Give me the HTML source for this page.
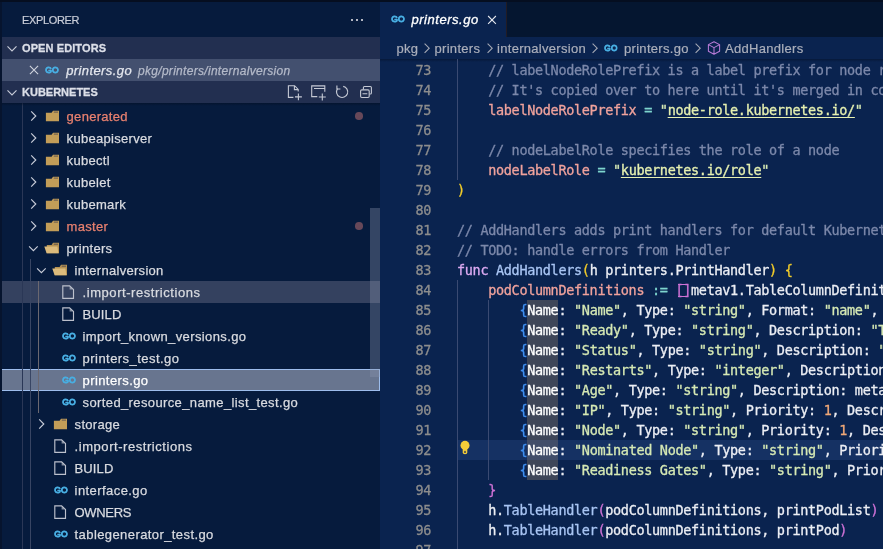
<!DOCTYPE html>
<html><head><meta charset="utf-8"><title>printers.go</title>
<style>
*{box-sizing:border-box;margin:0;padding:0}
html,body{width:883px;height:549px;overflow:hidden;background:#061b3d}
body{position:relative;font-family:"Liberation Sans",sans-serif;font-size:13px;color:#d6dae4;-webkit-font-smoothing:antialiased}
.ab{position:absolute}
#side{will-change:transform;position:absolute;left:0;top:0;width:380px;height:549px;background:#061b3d;overflow:hidden}
#edit{will-change:transform;position:absolute;left:380px;top:0;width:503px;height:549px;background:#0a234f;overflow:hidden}
.row{position:absolute;left:0;width:380px;height:22px}
.row.hov{background:#34415f}
.row.sel{background:#68758f;border:1px solid #9dbdec}
.row.sel>*{margin:-1px 0 0 -1px}
.lbl{position:absolute;top:1px;line-height:22px;white-space:nowrap;color:#d9dbe0;letter-spacing:0.3px;-webkit-text-stroke:0.25px}
.sel .lbl{color:#fff}
.ico,.chev{display:block}
.dot{position:absolute;left:355px;top:7.2px;width:7.6px;height:7.6px;border-radius:50%;background:#674859}
.hdr{position:absolute;left:0;width:380px;height:22px;background:#222f50;font-size:11px;font-weight:bold;line-height:22px;color:#dcdfe8;-webkit-text-stroke:0.3px}
.hdr .t{position:absolute;left:22px;top:0;letter-spacing:0.1px}
.ln{position:absolute;left:0;width:51px;height:20px;line-height:20px;text-align:right;color:#8d8d8d;font-family:"DejaVu Sans Mono","Liberation Mono",monospace;font-size:13.5px;letter-spacing:-0.327px;padding-right:0;-webkit-text-stroke:0.3px}
.cl{position:absolute;left:77px;width:440px;height:20px;line-height:20px;white-space:pre;font-family:"DejaVu Sans Mono","Liberation Mono",monospace;font-size:13.5px;letter-spacing:-0.327px;color:#e4e7f0;-webkit-text-stroke:0.3px}

.c{color:#7c88aa} .v{color:#f0a29c} .o{color:#7fd6cf} .s{color:#d6e9b4} .su{color:#e6f0b0;text-decoration:underline;text-underline-offset:2px}
.k{color:#dcaaf2} .f{color:#a9c5f3} .w{color:#eceef4} .n{color:#f0a878}
.b1{color:#f2cc2a} .b2{color:#cf72d6} .b3{color:#3f8ff0}
.bb{display:inline-block;height:20px;vertical-align:top;background:linear-gradient(#cf72d6,#cf72d6) 3px 3.7px/9.5px 1.3px no-repeat,linear-gradient(#cf72d6,#cf72d6) 3px 15.8px/9.5px 1.3px no-repeat}
.hl{background:#3e4658;color:#fff;display:inline-block;height:20px;vertical-align:top}
.cur .hl{background:#414d69}
.bc{position:absolute;top:37px;left:0;width:503px;height:22px;line-height:22px;color:#abafbb;white-space:nowrap;letter-spacing:0.3px;-webkit-text-stroke:0.2px}
.bc>span{position:absolute;top:1px}
</style></head><body>
<div id="side">
  <div class="ab" style="left:22px;top:11px;font-size:11px;line-height:18px;color:#c9cdd8;letter-spacing:-0.35px;-webkit-text-stroke:0.2px">EXPLORER</div>
  <div class="ab" style="left:351px;top:19px;width:2px;height:2px;background:#b2b6c2;box-shadow:5px 0 #b2b6c2,10px 0 #b2b6c2"></div>
  <div class="hdr" style="top:37px"><span class="ab" style="left:4px;top:3px"><svg class="chev" width="16" height="16" viewBox="0 0 16 16"><path d="M3.5 6.4 L8 10.9 L12.5 6.4" fill="none" stroke="#c8ccd8" stroke-width="1.15"/></svg></span><span class="t">OPEN EDITORS</span></div>
  <div class="row" style="top:59px;background:#43506f">
    <svg class="ab" style="left:26px;top:3px" width="16" height="16" viewBox="0 0 16 16"><path d="M3.9 3.9 L12.1 12.1 M12.1 3.9 L3.9 12.1" stroke="#d0d4de" stroke-width="1.1" fill="none"/></svg>
    <span class="ab" style="left:44px;top:3px"><svg class="ico go" width="16" height="16" viewBox="0 0 16 16"><text x="1.2" y="11.4" font-family="Liberation Sans, sans-serif" font-size="9.6" fill="#48aee2" stroke="#48aee2" stroke-width="1" stroke-linejoin="round" textLength="13.4" lengthAdjust="spacingAndGlyphs">GO</text></svg></span>
    <span class="lbl" style="left:66.2px;font-style:italic;color:#e4e7ee;letter-spacing:0.4px">printers.go</span>
    <span class="lbl" style="left:138px;font-style:italic;font-size:12px;color:#b4bac9">pkg/printers/internalversion</span>
  </div>
  <div class="hdr" style="top:81px"><span class="ab" style="left:4px;top:3px"><svg class="chev" width="16" height="16" viewBox="0 0 16 16"><path d="M3.5 6.4 L8 10.9 L12.5 6.4" fill="none" stroke="#c8ccd8" stroke-width="1.15"/></svg></span><span class="t" style="letter-spacing:0">KUBERNETES</span><svg class="ab" style="left:280px;top:0" width="100" height="22" viewBox="280 81 100 22" fill="none" stroke="#c5c9d4" stroke-width="1.1">
<path d="M293.4 97.4 H288.4 V85.7 H294.6 L298.2 89.4 V91.6 M294.4 85.9 V89.6 H298"/>
<path d="M298.4 93.6 V100.2 M295 96.9 H301.9"/>
<path d="M317.3 96.6 H311.7 V85.9 H324.8 V91.8 M314 88.5 H324.6" />
<path d="M322.3 93.6 V100.4 M318.8 97 H325.8"/>
<path d="M337.6 88.6 A5.6 5.6 0 1 0 343.2 86.4" />
<path d="M336.9 85.4 V89 H340.4" />
<rect x="360.6" y="89.9" width="8.6" height="7.6" rx="1.2"/>
<path d="M363.4 89.6 V87.6 Q363.4 86.5 364.5 86.5 H370.3 Q371.4 86.5 371.4 87.6 V92.9 Q371.4 94 370.3 94 H369.5 M362.5 93.7 H367.3"/>
</svg>
  </div>
<div class="row" style="top:105px"><span class="ab" style="left:25px;top:3px"><svg class="chev" width="16" height="16" viewBox="0 0 16 16"><path d="M6.2 3.4 L10.8 8 L6.2 12.6" fill="none" stroke="#c8ccd8" stroke-width="1.15"/></svg></span><span class="ab" style="left:45px;top:3px"><svg class="ico" width="16" height="16" viewBox="0 0 16 16"><path d="M0.9 4.7 H6.6 L8 2.65 H14 V13.3 H0.9 Z" fill="#c29d58"/><path d="M8.8 4.1 H13" stroke="#3a3a4a" stroke-width="0.7"/></svg></span><span class="lbl" style="left:66.6px;color:#e8806f;">generated</span><span class="dot"></span></div>
<div class="row" style="top:127px"><span class="ab" style="left:25px;top:3px"><svg class="chev" width="16" height="16" viewBox="0 0 16 16"><path d="M6.2 3.4 L10.8 8 L6.2 12.6" fill="none" stroke="#c8ccd8" stroke-width="1.15"/></svg></span><span class="ab" style="left:45px;top:3px"><svg class="ico" width="16" height="16" viewBox="0 0 16 16"><path d="M0.9 4.7 H6.6 L8 2.65 H14 V13.3 H0.9 Z" fill="#c29d58"/><path d="M8.8 4.1 H13" stroke="#3a3a4a" stroke-width="0.7"/></svg></span><span class="lbl" style="left:66.6px;">kubeapiserver</span></div>
<div class="row" style="top:149px"><span class="ab" style="left:25px;top:3px"><svg class="chev" width="16" height="16" viewBox="0 0 16 16"><path d="M6.2 3.4 L10.8 8 L6.2 12.6" fill="none" stroke="#c8ccd8" stroke-width="1.15"/></svg></span><span class="ab" style="left:45px;top:3px"><svg class="ico" width="16" height="16" viewBox="0 0 16 16"><path d="M0.9 4.7 H6.6 L8 2.65 H14 V13.3 H0.9 Z" fill="#c29d58"/><path d="M8.8 4.1 H13" stroke="#3a3a4a" stroke-width="0.7"/></svg></span><span class="lbl" style="left:66.6px;">kubectl</span></div>
<div class="row" style="top:171px"><span class="ab" style="left:25px;top:3px"><svg class="chev" width="16" height="16" viewBox="0 0 16 16"><path d="M6.2 3.4 L10.8 8 L6.2 12.6" fill="none" stroke="#c8ccd8" stroke-width="1.15"/></svg></span><span class="ab" style="left:45px;top:3px"><svg class="ico" width="16" height="16" viewBox="0 0 16 16"><path d="M0.9 4.7 H6.6 L8 2.65 H14 V13.3 H0.9 Z" fill="#c29d58"/><path d="M8.8 4.1 H13" stroke="#3a3a4a" stroke-width="0.7"/></svg></span><span class="lbl" style="left:66.6px;">kubelet</span></div>
<div class="row" style="top:193px"><span class="ab" style="left:25px;top:3px"><svg class="chev" width="16" height="16" viewBox="0 0 16 16"><path d="M6.2 3.4 L10.8 8 L6.2 12.6" fill="none" stroke="#c8ccd8" stroke-width="1.15"/></svg></span><span class="ab" style="left:45px;top:3px"><svg class="ico" width="16" height="16" viewBox="0 0 16 16"><path d="M0.9 4.7 H6.6 L8 2.65 H14 V13.3 H0.9 Z" fill="#c29d58"/><path d="M8.8 4.1 H13" stroke="#3a3a4a" stroke-width="0.7"/></svg></span><span class="lbl" style="left:66.6px;">kubemark</span></div>
<div class="row" style="top:215px"><span class="ab" style="left:25px;top:3px"><svg class="chev" width="16" height="16" viewBox="0 0 16 16"><path d="M6.2 3.4 L10.8 8 L6.2 12.6" fill="none" stroke="#c8ccd8" stroke-width="1.15"/></svg></span><span class="ab" style="left:45px;top:3px"><svg class="ico" width="16" height="16" viewBox="0 0 16 16"><path d="M0.9 4.7 H6.6 L8 2.65 H14 V13.3 H0.9 Z" fill="#c29d58"/><path d="M8.8 4.1 H13" stroke="#3a3a4a" stroke-width="0.7"/></svg></span><span class="lbl" style="left:66.6px;color:#e8806f;">master</span><span class="dot"></span></div>
<div class="row" style="top:237px"><span class="ab" style="left:25px;top:3px"><svg class="chev" width="16" height="16" viewBox="0 0 16 16"><path d="M4.1 6.3 L8.4 10.6 L12.7 6.3" fill="none" stroke="#c8ccd8" stroke-width="1.15"/></svg></span><span class="ab" style="left:45px;top:3px"><svg class="ico" style="overflow:visible" width="16" height="16" viewBox="0 0 16 16"><path d="M1.8 4.9 H6.6 L8 2.85 H14 V13.2 H1.8 Z" fill="#b59253"/><path d="M8.8 4.2 H13" stroke="#3a3a4a" stroke-width="0.7"/><path d="M-0.7 6.6 H12.4 L13.5 13.35 H1.6 Z" fill="#dcbb7c"/></svg></span><span class="lbl" style="left:66.6px;">printers</span></div>
<div class="row" style="top:259px"><span class="ab" style="left:33px;top:3px"><svg class="chev" width="16" height="16" viewBox="0 0 16 16"><path d="M4.1 6.3 L8.4 10.6 L12.7 6.3" fill="none" stroke="#c8ccd8" stroke-width="1.15"/></svg></span><span class="ab" style="left:53px;top:3px"><svg class="ico" style="overflow:visible" width="16" height="16" viewBox="0 0 16 16"><path d="M1.8 4.9 H6.6 L8 2.85 H14 V13.2 H1.8 Z" fill="#b59253"/><path d="M8.8 4.2 H13" stroke="#3a3a4a" stroke-width="0.7"/><path d="M-0.7 6.6 H12.4 L13.5 13.35 H1.6 Z" fill="#dcbb7c"/></svg></span><span class="lbl" style="left:74.6px;">internalversion</span></div>
<div class="row hov" style="top:281px"><span class="ab" style="left:61px;top:3px"><svg class="ico" width="16" height="16" viewBox="0 0 16 16"><path d="M8.6 1.8 V5.4 H12.5 Z" fill="#b8bcc8" opacity=".7"/><path d="M1.8 1.8 H8.6 L12.5 5.4 V14.3 H1.8 Z" fill="none" stroke="#bcc0cc" stroke-width="1.15"/></svg></span><span class="lbl" style="left:82.6px;letter-spacing:0.55px;">.import-restrictions</span></div>
<div class="row" style="top:303px"><span class="ab" style="left:61px;top:3px"><svg class="ico" width="16" height="16" viewBox="0 0 16 16"><path d="M8.6 1.8 V5.4 H12.5 Z" fill="#b8bcc8" opacity=".7"/><path d="M1.8 1.8 H8.6 L12.5 5.4 V14.3 H1.8 Z" fill="none" stroke="#bcc0cc" stroke-width="1.15"/></svg></span><span class="lbl" style="left:82.6px;letter-spacing:0.1px;">BUILD</span></div>
<div class="row" style="top:325px"><span class="ab" style="left:61px;top:3px"><svg class="ico go" width="16" height="16" viewBox="0 0 16 16"><text x="1.2" y="11.4" font-family="Liberation Sans, sans-serif" font-size="9.6" fill="#48aee2" stroke="#48aee2" stroke-width="1" stroke-linejoin="round" textLength="13.4" lengthAdjust="spacingAndGlyphs">GO</text></svg></span><span class="lbl" style="left:82.6px;letter-spacing:0.38px;">import_known_versions.go</span></div>
<div class="row" style="top:347px"><span class="ab" style="left:61px;top:3px"><svg class="ico go" width="16" height="16" viewBox="0 0 16 16"><text x="1.2" y="11.4" font-family="Liberation Sans, sans-serif" font-size="9.6" fill="#48aee2" stroke="#48aee2" stroke-width="1" stroke-linejoin="round" textLength="13.4" lengthAdjust="spacingAndGlyphs">GO</text></svg></span><span class="lbl" style="left:82.6px;letter-spacing:0.45px;">printers_test.go</span></div>
<div class="row sel" style="top:369px"><span class="ab" style="left:61px;top:3px"><svg class="ico go" width="16" height="16" viewBox="0 0 16 16"><text x="1.2" y="11.4" font-family="Liberation Sans, sans-serif" font-size="9.6" fill="#48aee2" stroke="#48aee2" stroke-width="1" stroke-linejoin="round" textLength="13.4" lengthAdjust="spacingAndGlyphs">GO</text></svg></span><span class="lbl" style="left:82.6px;letter-spacing:0.4px;">printers.go</span></div>
<div class="row" style="top:391px"><span class="ab" style="left:61px;top:3px"><svg class="ico go" width="16" height="16" viewBox="0 0 16 16"><text x="1.2" y="11.4" font-family="Liberation Sans, sans-serif" font-size="9.6" fill="#48aee2" stroke="#48aee2" stroke-width="1" stroke-linejoin="round" textLength="13.4" lengthAdjust="spacingAndGlyphs">GO</text></svg></span><span class="lbl" style="left:82.6px;letter-spacing:0.38px;">sorted_resource_name_list_test.go</span></div>
<div class="row" style="top:413px"><span class="ab" style="left:33px;top:3px"><svg class="chev" width="16" height="16" viewBox="0 0 16 16"><path d="M6.2 3.4 L10.8 8 L6.2 12.6" fill="none" stroke="#c8ccd8" stroke-width="1.15"/></svg></span><span class="ab" style="left:53px;top:3px"><svg class="ico" width="16" height="16" viewBox="0 0 16 16"><path d="M0.9 4.7 H6.6 L8 2.65 H14 V13.3 H0.9 Z" fill="#c29d58"/><path d="M8.8 4.1 H13" stroke="#3a3a4a" stroke-width="0.7"/></svg></span><span class="lbl" style="left:74.6px;">storage</span></div>
<div class="row" style="top:435px"><span class="ab" style="left:53px;top:3px"><svg class="ico" width="16" height="16" viewBox="0 0 16 16"><path d="M8.6 1.8 V5.4 H12.5 Z" fill="#b8bcc8" opacity=".7"/><path d="M1.8 1.8 H8.6 L12.5 5.4 V14.3 H1.8 Z" fill="none" stroke="#bcc0cc" stroke-width="1.15"/></svg></span><span class="lbl" style="left:74.6px;letter-spacing:0.55px;">.import-restrictions</span></div>
<div class="row" style="top:457px"><span class="ab" style="left:53px;top:3px"><svg class="ico" width="16" height="16" viewBox="0 0 16 16"><path d="M8.6 1.8 V5.4 H12.5 Z" fill="#b8bcc8" opacity=".7"/><path d="M1.8 1.8 H8.6 L12.5 5.4 V14.3 H1.8 Z" fill="none" stroke="#bcc0cc" stroke-width="1.15"/></svg></span><span class="lbl" style="left:74.6px;letter-spacing:0.1px;">BUILD</span></div>
<div class="row" style="top:479px"><span class="ab" style="left:53px;top:3px"><svg class="ico go" width="16" height="16" viewBox="0 0 16 16"><text x="1.2" y="11.4" font-family="Liberation Sans, sans-serif" font-size="9.6" fill="#48aee2" stroke="#48aee2" stroke-width="1" stroke-linejoin="round" textLength="13.4" lengthAdjust="spacingAndGlyphs">GO</text></svg></span><span class="lbl" style="left:74.6px;letter-spacing:0.43px;">interface.go</span></div>
<div class="row" style="top:501px"><span class="ab" style="left:53px;top:3px"><svg class="ico" width="16" height="16" viewBox="0 0 16 16"><path d="M8.6 1.8 V5.4 H12.5 Z" fill="#b8bcc8" opacity=".7"/><path d="M1.8 1.8 H8.6 L12.5 5.4 V14.3 H1.8 Z" fill="none" stroke="#bcc0cc" stroke-width="1.15"/></svg></span><span class="lbl" style="left:74.6px;letter-spacing:-0.35px;">OWNERS</span></div>
<div class="row" style="top:523px"><span class="ab" style="left:53px;top:3px"><svg class="ico go" width="16" height="16" viewBox="0 0 16 16"><text x="1.2" y="11.4" font-family="Liberation Sans, sans-serif" font-size="9.6" fill="#48aee2" stroke="#48aee2" stroke-width="1" stroke-linejoin="round" textLength="13.4" lengthAdjust="spacingAndGlyphs">GO</text></svg></span><span class="lbl" style="left:74.6px;letter-spacing:0.41px;">tablegenerator_test.go</span></div>
<div class="row" style="top:545px"><span class="ab" style="left:53px;top:3px"><svg class="ico go" width="16" height="16" viewBox="0 0 16 16"><text x="1.2" y="11.4" font-family="Liberation Sans, sans-serif" font-size="9.6" fill="#48aee2" stroke="#48aee2" stroke-width="1" stroke-linejoin="round" textLength="13.4" lengthAdjust="spacingAndGlyphs">GO</text></svg></span><span class="lbl" style="left:74.6px;">tablegenerator.go</span></div>
  <div class="ab" style="left:22px;top:103px;width:1px;height:446px;background:#2a3756"></div>
  <div class="ab" style="left:30px;top:259px;width:1px;height:290px;background:#384563"></div>
  <div class="ab" style="left:38px;top:281px;width:1px;height:132px;background:#6b6870"></div>
  <div class="ab" style="left:370px;top:208px;width:10px;height:169px;background:rgba(140,150,175,.35)"></div>
  <div class="ab" style="left:2px;top:103px;width:378px;height:3px;background:linear-gradient(#03102699,#03102600)"></div>
  <div class="ab" style="left:0;top:0;width:2px;height:549px;background:#06142e"></div>
</div>
<div id="edit">
  <div class="ab" style="left:0;top:0;width:503px;height:37px;background:#051630"></div>
  <div class="ab" style="left:0;top:0;width:127px;height:37px;background:#0a234f;border-right:1px solid #221c24"></div>
  <span class="ab" style="left:10px;top:11px"><svg class="ico go" width="16" height="16" viewBox="0 0 16 16"><text x="1.2" y="11.4" font-family="Liberation Sans, sans-serif" font-size="9.6" fill="#48aee2" stroke="#48aee2" stroke-width="1" stroke-linejoin="round" textLength="13.4" lengthAdjust="spacingAndGlyphs">GO</text></svg></span>
  <div class="ab" style="left:31.5px;top:10px;line-height:20px;font-style:italic;color:#fff;letter-spacing:0.52px;-webkit-text-stroke:0.3px">printers.go</div>
  <svg class="ab" style="left:104px;top:12px" width="16" height="16" viewBox="0 0 16 16"><path d="M4.1 4 L11.9 11.8 M11.9 4 L4.1 11.8" stroke="#e4e7ee" stroke-width="1.1" fill="none"/></svg>
  <div class="bc">
    <span style="left:16.5px">pkg</span><svg class="ab" style="left:39px;top:3px" width="16" height="16" viewBox="0 0 16 16"><path d="M5.6 3.6 L10.2 8.2 L5.6 12.8" fill="none" stroke="#a4a8b4" stroke-width="1.1"/></svg><span style="left:54.5px">printers</span><svg class="ab" style="left:102px;top:3px" width="16" height="16" viewBox="0 0 16 16"><path d="M5.6 3.6 L10.2 8.2 L5.6 12.8" fill="none" stroke="#a4a8b4" stroke-width="1.1"/></svg><span style="left:117px">internalversion</span><svg class="ab" style="left:207px;top:3px" width="16" height="16" viewBox="0 0 16 16"><path d="M5.6 3.6 L10.2 8.2 L5.6 12.8" fill="none" stroke="#a4a8b4" stroke-width="1.1"/></svg><span class="ab" style="left:222.5px;top:3px"><svg class="ico go" width="16" height="16" viewBox="0 0 16 16"><text x="1.2" y="11.4" font-family="Liberation Sans, sans-serif" font-size="9.6" fill="#48aee2" stroke="#48aee2" stroke-width="1" stroke-linejoin="round" textLength="13.4" lengthAdjust="spacingAndGlyphs">GO</text></svg></span><span style="left:244px">printers.go</span><svg class="ab" style="left:310px;top:3px" width="16" height="16" viewBox="0 0 16 16"><path d="M5.6 3.6 L10.2 8.2 L5.6 12.8" fill="none" stroke="#a4a8b4" stroke-width="1.1"/></svg><svg class="ab" style="left:326px;top:3px" width="16" height="16" viewBox="0 0 16 16"><path d="M8 1.8 L13.6 4.6 V11.2 L8 14.2 L2.4 11.2 V4.6 Z M2.4 4.6 L8 7.6 L13.6 4.6 M8 7.6 V14.2" fill="none" stroke="#b77bd6" stroke-width="1.05" stroke-linejoin="round"/></svg><span style="left:345px">AddHandlers</span>
  </div>
  <div class="ab" style="left:0;top:59px;width:503px;height:3px;background:linear-gradient(#03102688,#03102600)"></div>
<div class="ab" style="left:77px;top:440px;width:426px;height:20px;background:#153163"></div>
<div class="ab" style="left:77px;top:59px;width:1px;height:121px;background:#3a4a72"></div>
<div class="ab" style="left:77px;top:280px;width:1px;height:280px;background:#3a4a72"></div>
<div class="ab" style="left:108px;top:300px;width:1px;height:180px;background:#3a4a72"></div>
<div class="ln" style="top:60px">73</div><div class="cl" style="top:60px"><span class="i">    </span><span class="c">// labelNodeRolePrefix is a label prefix for node roles</span></div>
<div class="ln" style="top:80px">74</div><div class="cl" style="top:80px"><span class="i">    </span><span class="c">// It's copied over to here until it's merged in core</span></div>
<div class="ln" style="top:100px">75</div><div class="cl" style="top:100px"><span class="i">    </span><span class="v">labelNodeRolePrefix</span><span class="o"> = </span><span class="s">"</span><span class="su">node-role.kubernetes.io/</span><span class="s">"</span></div>
<div class="ln" style="top:120px">76</div><div class="cl" style="top:120px"></div>
<div class="ln" style="top:140px">77</div><div class="cl" style="top:140px"><span class="i">    </span><span class="c">// nodeLabelRole specifies the role of a node</span></div>
<div class="ln" style="top:160px">78</div><div class="cl" style="top:160px"><span class="i">    </span><span class="v">nodeLabelRole</span><span class="o"> = </span><span class="s">"</span><span class="su">kubernetes.io/role</span><span class="s">"</span></div>
<div class="ln" style="top:180px">79</div><div class="cl" style="top:180px"><span class="b1">)</span></div>
<div class="ln" style="top:200px">80</div><div class="cl" style="top:200px"></div>
<div class="ln" style="top:220px">81</div><div class="cl" style="top:220px"><span class="c">// AddHandlers adds print handlers for default Kubernetes types dealing with internal versions.</span></div>
<div class="ln" style="top:240px">82</div><div class="cl" style="top:240px"><span class="c">// TODO: handle errors from Handler</span></div>
<div class="ln" style="top:260px">83</div><div class="cl" style="top:260px"><span class="k">func</span><span class="w"> </span><span class="f">AddHandlers</span><span class="b1">(</span><span class="w">h printers.PrintHandler</span><span class="b1">)</span><span class="w"> </span><span class="b1">{</span></div>
<div class="ln" style="top:280px">84</div><div class="cl" style="top:280px"><span class="i">    </span><span class="v">podColumnDefinitions</span><span class="o"> := </span><span class="b2 bb">[]</span><span class="w">metav1.TableColumnDefinition</span><span class="b2">{</span></div>
<div class="ln" style="top:300px">85</div><div class="cl" style="top:300px"><span class="i">        </span><span class="b3">{</span><span class="hl">Name</span><span class="w">: </span><span class="s">"Name"</span><span class="w">, Type: </span><span class="s">"string"</span><span class="w">, Format: </span><span class="s">"name"</span><span class="w">, Description: metav1.ObjectMeta</span></div>
<div class="ln" style="top:320px">86</div><div class="cl" style="top:320px"><span class="i">        </span><span class="b3">{</span><span class="hl">Name</span><span class="w">: </span><span class="s">"Ready"</span><span class="w">, Type: </span><span class="s">"string"</span><span class="w">, Description: </span><span class="s">"The aggregate readiness"</span></div>
<div class="ln" style="top:340px">87</div><div class="cl" style="top:340px"><span class="i">        </span><span class="b3">{</span><span class="hl">Name</span><span class="w">: </span><span class="s">"Status"</span><span class="w">, Type: </span><span class="s">"string"</span><span class="w">, Description: </span><span class="s">"The aggregate status"</span></div>
<div class="ln" style="top:360px">88</div><div class="cl" style="top:360px"><span class="i">        </span><span class="b3">{</span><span class="hl">Name</span><span class="w">: </span><span class="s">"Restarts"</span><span class="w">, Type: </span><span class="s">"integer"</span><span class="w">, Description: </span><span class="s">"The number"</span></div>
<div class="ln" style="top:380px">89</div><div class="cl" style="top:380px"><span class="i">        </span><span class="b3">{</span><span class="hl">Name</span><span class="w">: </span><span class="s">"Age"</span><span class="w">, Type: </span><span class="s">"string"</span><span class="w">, Description: metav1.ObjectMeta</span></div>
<div class="ln" style="top:400px">90</div><div class="cl" style="top:400px"><span class="i">        </span><span class="b3">{</span><span class="hl">Name</span><span class="w">: </span><span class="s">"IP"</span><span class="w">, Type: </span><span class="s">"string"</span><span class="w">, Priority: </span><span class="n">1</span><span class="w">, Description: apiv1</span></div>
<div class="ln" style="top:420px">91</div><div class="cl" style="top:420px"><span class="i">        </span><span class="b3">{</span><span class="hl">Name</span><span class="w">: </span><span class="s">"Node"</span><span class="w">, Type: </span><span class="s">"string"</span><span class="w">, Priority: </span><span class="n">1</span><span class="w">, Description: apiv1</span></div>
<div class="ln" style="top:440px">92</div><div class="cl cur" style="top:440px"><span class="i">        </span><span class="b3">{</span><span class="hl">Name</span><span class="w">: </span><span class="s">"Nominated Node"</span><span class="w">, Type: </span><span class="s">"string"</span><span class="w">, Priority: </span><span class="n">1</span><span class="w">, Desc</span></div>
<div class="ln" style="top:460px">93</div><div class="cl" style="top:460px"><span class="i">        </span><span class="b3">{</span><span class="hl">Name</span><span class="w">: </span><span class="s">"Readiness Gates"</span><span class="w">, Type: </span><span class="s">"string"</span><span class="w">, Priority: </span><span class="n">1</span><span class="w">, Desc</span></div>
<div class="ln" style="top:480px">94</div><div class="cl" style="top:480px"><span class="i">    </span><span class="b2">}</span></div>
<div class="ln" style="top:500px">95</div><div class="cl" style="top:500px"><span class="i">    </span><span class="w">h.</span><span class="f">TableHandler</span><span class="b2">(</span><span class="w">podColumnDefinitions, printPodList</span><span class="b2">)</span></div>
<div class="ln" style="top:520px">96</div><div class="cl" style="top:520px"><span class="i">    </span><span class="w">h.</span><span class="f">TableHandler</span><span class="b2">(</span><span class="w">podColumnDefinitions, printPod</span><span class="b2">)</span></div>
<div class="ln" style="top:540px">97</div><div class="cl" style="top:540px"></div>
  <svg class="ab" style="left:77.4px;top:440px" width="16" height="16" viewBox="0 0 16 16"><circle cx="8" cy="5.4" r="4.55" fill="#f4cd38"/><path d="M5.7 8 H10.3 V12.8 Q10.3 14.2 8 14.2 Q5.7 14.2 5.7 12.8 Z" fill="#f4cd38"/><ellipse cx="8" cy="11.9" rx="0.75" ry="1.2" fill="#1a2a5a"/></svg>

</div>
<div class="ab" style="left:0;top:0;width:883px;height:2px;background:#050e20"></div>
</body></html>
